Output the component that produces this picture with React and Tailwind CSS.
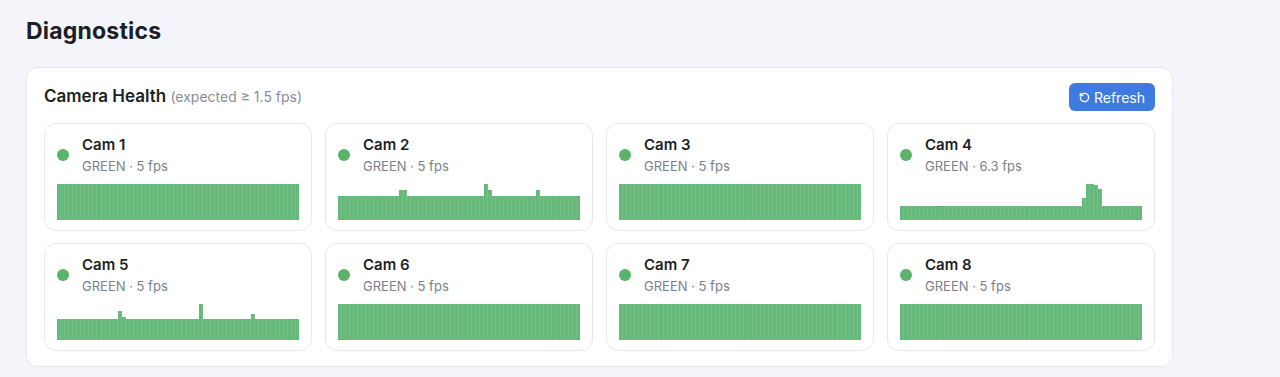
import { RotateCw } from 'lucide-react';

const BARS = 60;

// build a series of bar heights (0..1) from a base and a few spikes
function series(base, spikes = {}) {
  return Array.from({ length: BARS }, (_, i) => (spikes[i] !== undefined ? spikes[i] : base));
}

const cams = [
  { name: 'Cam 1', fps: '5', bars: series(1) },
  { name: 'Cam 2', fps: '5', bars: series(24 / 36, { 15: 30 / 36, 16: 30 / 36, 36: 1, 37: 30 / 36, 49: 30 / 36 }) },
  { name: 'Cam 3', fps: '5', bars: series(1) },
  { name: 'Cam 4', fps: '6.3', bars: series(14 / 36, { 45: 22 / 36, 46: 1, 47: 1, 48: 35 / 36, 49: 31 / 36 }) },
  { name: 'Cam 5', fps: '5', bars: series(21 / 36, { 15: 29 / 36, 16: 23 / 36, 35: 1, 48: 26 / 36 }) },
  { name: 'Cam 6', fps: '5', bars: series(1) },
  { name: 'Cam 7', fps: '5', bars: series(1) },
  { name: 'Cam 8', fps: '5', bars: series(1) },
];

function CamCard({ cam }) {
  return (
    <div className="rounded-xl border border-[#e6e8ee] bg-white px-3 pt-[11px] pb-[10px]">
      <div className="flex items-center gap-[13px]">
        <span className="h-3 w-3 rounded-full bg-[#5bb26a]" />
        <div>
          <div className="text-[15px] font-semibold leading-5 text-[#1c1f26]">{cam.name}</div>
          <div className="mt-[2px] text-[13px] leading-[18px] text-[#7d8089]">GREEN · {cam.fps} fps</div>
        </div>
      </div>
      <div className="mt-[9px] flex h-9 items-end">
        {cam.bars.map((h, i) => (
          <div
            key={i}
            className="flex-1 border-r border-[#74c086] bg-[#66b97a] last:border-r-0"
            style={{ height: `${h * 100}%` }}
          />
        ))}
      </div>
    </div>
  );
}

export default function App() {
  return (
    <div className="min-h-screen bg-[#f4f5fa] px-[26px] pt-[17px] font-['Inter',sans-serif]">
      <h1 className="text-[23px] font-bold leading-7 tracking-[0.2px] text-[#1c1f26]">Diagnostics</h1>
      <div className="mt-[22px] w-[1147px] rounded-xl border border-[#e6e8ee] bg-white px-[17px] pt-[15px] pb-[15px]">
        <div className="mb-3 flex items-center justify-between">
          <h2 className="text-[17px] font-semibold text-[#1c1f26]">
            Camera Health <span className="text-[14px] font-normal text-[#8a8d96]">(expected ≥ 1.5 fps)</span>
          </h2>
          <button className="flex h-7 items-center gap-1 rounded-md bg-[#3d7be0] px-[10px] text-[14px] text-white">
            <RotateCw size={11} strokeWidth={3} className="-scale-x-100" />
            Refresh
          </button>
        </div>
        <div className="grid grid-cols-4 gap-x-[13px] gap-y-3">
          {cams.map((c) => (
            <CamCard key={c.name} cam={c} />
          ))}
        </div>
      </div>
    </div>
  );
}
